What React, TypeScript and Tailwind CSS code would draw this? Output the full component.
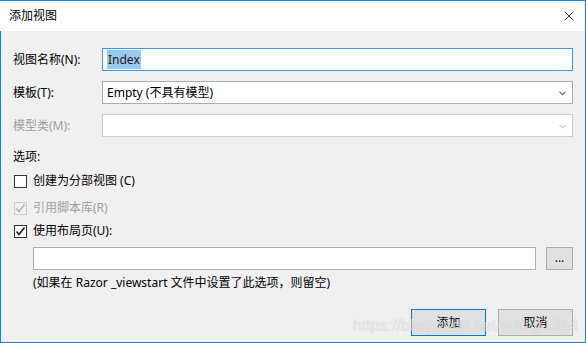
import { X } from 'lucide-react';

const font = "font-['Noto_Sans','Noto_Sans_CJK_SC',sans-serif]";

function Chevron({ disabled }: { disabled?: boolean }) {
  return (
    <svg width="7" height="5" viewBox="0 0 7 5" className="absolute right-[6px] top-[9px]">
      <path d="M0.5 0.8 L3.5 3.8 L6.5 0.8" fill="none" stroke={disabled ? '#c4c4c4' : '#606060'} strokeWidth="1.1" />
    </svg>
  );
}

function Check({ checked, disabled, label }: { checked?: boolean; disabled?: boolean; label: string }) {
  return (
    <div className="flex items-center h-[16px]">
      <div
        className={`w-[13px] h-[13px] ml-[1px] border ${disabled ? 'border-[#cccccc] bg-[#f0f0f0]' : 'border-[#333333] bg-white'} relative`}
      >
        {checked && (
          <svg width="11" height="11" viewBox="0 0 11 11" className="absolute left-0 top-0">
            <path d="M1.5 5.5 L4 8.5 L9.5 1.5" fill="none" stroke={disabled ? '#b4b4b4' : '#1a1a1a'} strokeWidth="1.6" />
          </svg>
        )}
      </div>
      <span className={`ml-[6px] ${disabled ? 'text-[#a0a0a0]' : 'text-black'}`}>{label}</span>
    </div>
  );
}

export default function App() {
  return (
    <div className={`w-[586px] h-[343px] bg-[#f0f0f0] border-t border-r border-b border-[#1883d7] flex flex-col text-[12px] leading-[16px] relative overflow-hidden ${font}`}>
      {/* Title bar */}
      <div className="h-[30px] bg-white flex items-center justify-between pl-[9px] pr-[8px] shrink-0">
        <span className="text-black text-[12px]">添加视图</span>
        <X size={16} strokeWidth={1.2} className="text-black" />
      </div>

      <div className="flex-1 flex flex-col border-l border-[#1883d7] pl-[12px] pr-[12px]">
        {/* Fields */}
        <div className="flex items-center mt-[17px] h-[23px]">
          <span className="w-[89px] text-black">视图名称(N):</span>
          <div className="flex-1 h-[23px] bg-white border border-[#3d96e6] flex items-center pl-[4px]">
            <span className="bg-[#99c9ef] text-[#1a1a1a] px-[1px] leading-[19px]">Index</span>
          </div>
        </div>

        <div className="flex items-center mt-[10px] h-[23px]">
          <span className="w-[89px] text-black">模板(T):</span>
          <div className="flex-1 h-[23px] bg-white border border-[#adadad] flex items-center pl-[4px] relative">
            <span className="text-black">Empty (不具有模型)</span>
            <Chevron />
          </div>
        </div>

        <div className="flex items-center mt-[10px] h-[23px]">
          <span className="w-[89px] text-[#a0a0a0]">模型类(M):</span>
          <div className="flex-1 h-[23px] bg-white border border-[#cccccc] relative">
            <Chevron disabled />
          </div>
        </div>

        <div className="mt-[12px] text-black h-[16px]">选项:</div>

        {/* Options */}
        <div className="mt-[8px] flex flex-col">
          <Check label="创建为分部视图 (C)" />
          <div className="mt-[11px]">
            <Check label="引用脚本库(R)" checked disabled />
          </div>
          <div className="mt-[7px]">
            <Check label="使用布局页(U):" checked />
          </div>
        </div>

        <div className="flex items-center mt-[8px] pl-[20px] h-[23px]">
          <div className="flex-1 h-[23px] bg-white border border-[#adadad]" />
          <div className="ml-[10px] w-[27px] h-[23px] bg-[#e1e1e1] border border-[#adadad] flex items-center justify-center text-black leading-[10px] pb-[2px]">
            ...
          </div>
        </div>

        <div className="mt-[5px] pl-[20px] text-black">(如果在 Razor _viewstart 文件中设置了此选项，则留空)</div>

        <div className="flex justify-end gap-[12px] mt-[18px]">
          <div className="w-[75px] h-[27px] bg-[#e1e1e1] border border-[#0078d7] flex items-center justify-center text-black">添加</div>
          <div className="w-[75px] h-[27px] bg-[#e1e1e1] border border-[#adadad] flex items-center justify-center text-black">取消</div>
        </div>
      </div>

      {/* Watermark */}
      <div className="absolute left-[353px] top-[315px] text-[16px] leading-[20px] text-white/60 font-['Liberation_Sans',sans-serif] [text-shadow:0_0_1px_rgba(0,0,0,0.2)] pointer-events-none whitespace-nowrap">
        https://blog.csdn.net/yujing1314
      </div>
    </div>
  );
}
